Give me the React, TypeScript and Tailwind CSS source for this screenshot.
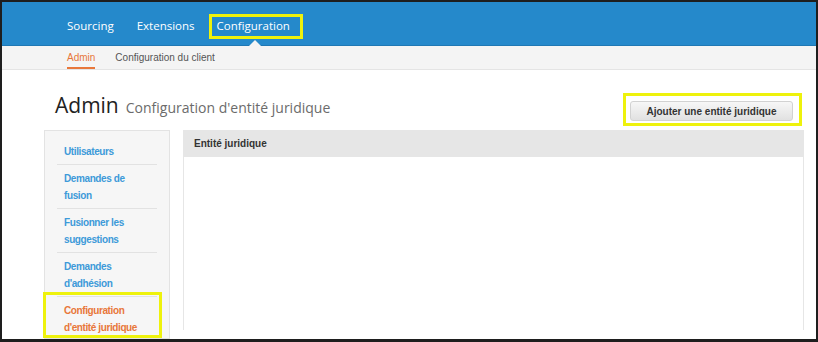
const SIDE_LINKS = [
  ['Utilisateurs'],
  ['Demandes de', 'fusion'],
  ['Fusionner les', 'suggestions'],
  ['Demandes', "d'adhésion"],
]

export default function App() {
  return (
    <div className="w-[818px] h-[342px] overflow-hidden bg-white border-t-2 border-l-2 border-r-2 border-b-[3px] border-[#1e1e1e] flex flex-col font-['Liberation_Sans',Arial,sans-serif]">
      {/* top nav */}
      <div className="relative h-[44px] shrink-0 bg-[#2589cb] border-b border-[#1f78b4] flex items-center pl-[65px] pt-[5px] font-['Open_Sans',sans-serif] text-[11.5px] text-white">
        <span>Sourcing</span>
        <span className="ml-[23px]">Extensions</span>
        <span className="ml-[14px] h-[25px] border-[3px] border-[#eef20c] pl-[5px] pr-[10px] flex items-center">
          Configuration
        </span>
        <div className="absolute left-[247px] bottom-[-1px] w-0 h-0 border-l-[6px] border-r-[6px] border-b-[6px] border-l-transparent border-r-transparent border-b-[#f4f4f4]" />
      </div>

      {/* sub nav */}
      <div className="h-[24px] shrink-0 bg-[#f4f4f4] border-b border-[#e4e4e4] flex items-stretch pl-[65px] text-[10px]">
        <span className="flex items-center border-b-2 border-[#e8773a] text-[#e8773a] pt-[2px]">Admin</span>
        <span className="flex items-center ml-[20px] text-[#555]">Configuration du client</span>
      </div>

      {/* title row */}
      <div className="flex justify-between items-start pl-[53px] pr-[14px] mt-[21px]">
        <div className="flex items-baseline font-['Open_Sans',sans-serif] leading-[28px]">
          <span className="text-[21px] text-[#222]">Admin</span>
          <span className="ml-[7px] text-[14px] text-[#6b6b6b]">Configuration d'entité juridique</span>
        </div>
        <div className="mt-[2px] w-[179px] h-[33px] border-[3px] border-[#eef20c] pl-[4px] pt-[5px]">
          <button className="w-[163px] h-[20px] rounded-[3px] border border-[#d2d2d2] bg-gradient-to-b from-[#f7f7f7] to-[#e1e1e1] text-[10px] font-bold text-[#333] flex items-center justify-center">
            Ajouter une entité juridique
          </button>
        </div>
      </div>

      {/* content */}
      <div className="flex gap-[13px] pl-[42px] mt-[4px] flex-1">
        <div className="w-[126px] bg-[#f6f6f6] border border-[#e3e3e3] pt-[7px] px-[12px] text-[10px] font-bold tracking-[-0.4px]">
          {SIDE_LINKS.map((lines, i) => (
            <div key={i} className="pl-[7px] pt-[5px] pb-[4px] border-b border-[#e2e2e2] leading-[17px] text-[#3d9ad9]">
              {lines.map((l) => (
                <div key={l}>{l}</div>
              ))}
            </div>
          ))}
          <div className="relative pl-[7px] pt-[5px] leading-[17px] text-[#e8773a]">
            <div>Configuration</div>
            <div>d'entité juridique</div>
            <div className="absolute left-[-14px] top-[-5px] w-[119px] h-[46px] border-[3px] border-[#eef20c]" />
          </div>
        </div>

        <div className="w-[621px] h-[200px] border-l border-r border-[#e6e6e6]">
          <div className="h-[27px] bg-[#e6e6e6] flex items-center pl-[10px] text-[10px] font-bold text-[#333]">
            Entité juridique
          </div>
        </div>
      </div>
    </div>
  )
}
